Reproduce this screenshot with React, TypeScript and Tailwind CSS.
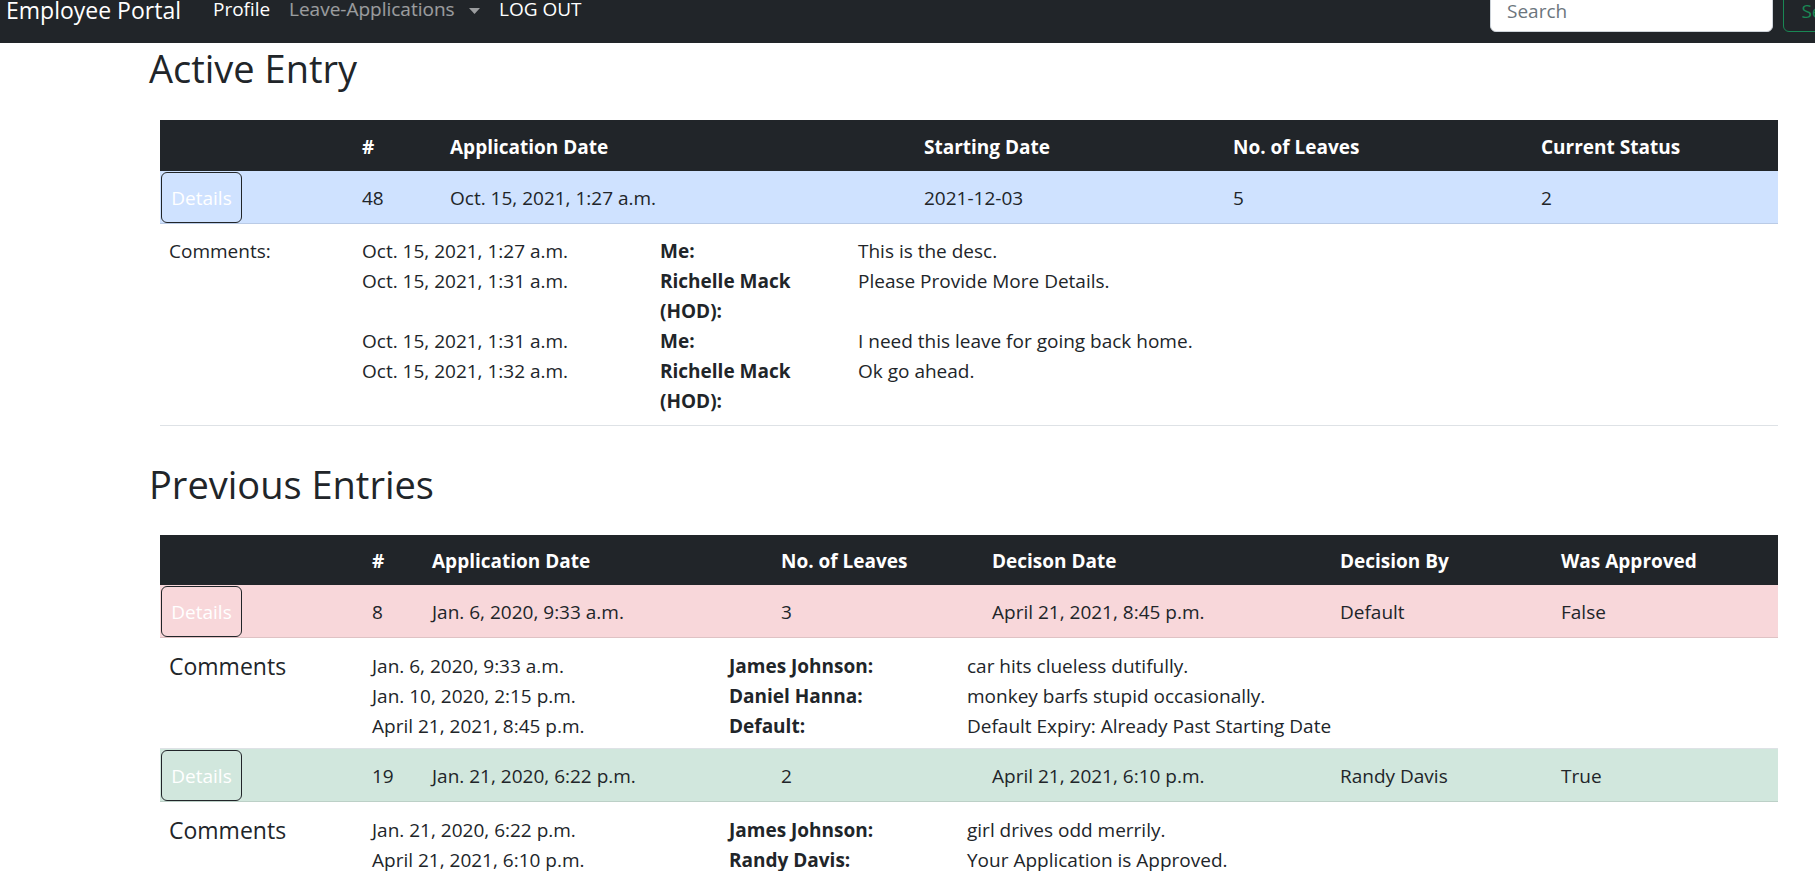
import React from "react";

type Comment = { date: string; by: string; text: string };

const activeComments: Comment[] = [
  { date: "Oct. 15, 2021, 1:27 a.m.", by: "Me:", text: "This is the desc." },
  { date: "Oct. 15, 2021, 1:31 a.m.", by: "Richelle Mack (HOD):", text: "Please Provide More Details." },
  { date: "Oct. 15, 2021, 1:31 a.m.", by: "Me:", text: "I need this leave for going back home." },
  { date: "Oct. 15, 2021, 1:32 a.m.", by: "Richelle Mack (HOD):", text: "Ok go ahead." },
];

type PrevEntry = {
  id: number;
  applied: string;
  leaves: number;
  decided: string;
  by: string;
  approved: boolean;
  comments: Comment[];
};

const previous: PrevEntry[] = [
  {
    id: 8,
    applied: "Jan. 6, 2020, 9:33 a.m.",
    leaves: 3,
    decided: "April 21, 2021, 8:45 p.m.",
    by: "Default",
    approved: false,
    comments: [
      { date: "Jan. 6, 2020, 9:33 a.m.", by: "James Johnson:", text: "car hits clueless dutifully." },
      { date: "Jan. 10, 2020, 2:15 p.m.", by: "Daniel Hanna:", text: "monkey barfs stupid occasionally." },
      { date: "April 21, 2021, 8:45 p.m.", by: "Default:", text: "Default Expiry: Already Past Starting Date" },
    ],
  },
  {
    id: 19,
    applied: "Jan. 21, 2020, 6:22 p.m.",
    leaves: 2,
    decided: "April 21, 2021, 6:10 p.m.",
    by: "Randy Davis",
    approved: true,
    comments: [
      { date: "Jan. 21, 2020, 6:22 p.m.", by: "James Johnson:", text: "girl drives odd merrily." },
      { date: "April 21, 2021, 6:10 p.m.", by: "Randy Davis:", text: "Your Application is Approved." },
    ],
  },
];

function DetailsButton() {
  return (
    <button
      type="button"
      className="ml-px h-[51px] w-[81px] rounded-[6px] border border-[#212529] pt-[2px] text-center text-[19px] text-white"
    >
      Details
    </button>
  );
}

function Navbar() {
  return (
    <nav className="h-[43px] overflow-hidden bg-[#212529]">
      <div className="flex w-[1890px] items-start pr-[10px] text-[19px] leading-[19px]">
        <a className="-mt-px ml-[6px] w-[207px] shrink-0 text-[23px] leading-[23px] text-white">Employee Portal</a>
        <a className="w-[76px] shrink-0 text-white">Profile</a>
        <a className="flex w-[210px] shrink-0 items-start text-white/55">
          <span className="w-[180px]">Leave-Applications</span>
          <svg width="11" height="6" viewBox="0 0 11 6" className="mt-[8px]" aria-hidden="true">
            <path d="M0 0h11L5.5 6z" fill="currentColor" />
          </svg>
        </a>
        <a className="shrink-0 text-white">LOG OUT</a>
        <div className="ml-auto flex shrink-0 items-start">
          <input
            type="text"
            placeholder="Search"
            className="-mt-[15px] h-[47px] w-[283px] rounded-[6px] border border-[#ced4da] bg-white px-[16px] pt-[5px] text-[19px] text-[#212529] outline-none placeholder:text-[#6c757d]"
          />
          <button
            type="button"
            className="-mt-[15px] ml-[10px] h-[47px] w-[97px] rounded-[6px] border border-[#198754] pt-[5px] text-[19px] text-[#198754]"
          >
            Search
          </button>
        </div>
      </div>
    </nav>
  );
}

function ActiveEntry() {
  const cols = "grid grid-cols-[192px_88px_474px_309px_308px_1fr]";
  return (
    <div>
      <div className={`${cols} h-[51px] items-center bg-[#212529] pt-[3px] text-[19px] font-bold text-white`}>
        <div />
        <div className="px-[10px]">#</div>
        <div className="px-[10px]">Application Date</div>
        <div className="px-[10px]">Starting Date</div>
        <div className="px-[10px]">No. of Leaves</div>
        <div className="px-[10px]">Current Status</div>
      </div>
      <div className={`${cols} h-[53px] items-center border-b border-[#bacbe6] bg-[#cfe2ff]`}>
        <div>
          <DetailsButton />
        </div>
        <div className="px-[10px] pt-[3px]">48</div>
        <div className="px-[10px] pt-[3px]">Oct. 15, 2021, 1:27 a.m.</div>
        <div className="px-[10px] pt-[3px]">2021-12-03</div>
        <div className="px-[10px] pt-[3px]">5</div>
        <div className="px-[10px] pt-[3px]">2</div>
      </div>
      <div className="grid grid-cols-[192px_1fr] border-b border-[#dee2e6] pt-[12px] pb-[9px] leading-[30px]">
        <div className="pl-[9px]">Comments:</div>
        <div className="grid grid-cols-[298px_198px_1fr]">
          {activeComments.map((c, i) => (
            <React.Fragment key={i}>
              <div className="px-[10px]">{c.date}</div>
              <div className="px-[10px] font-bold">{c.by}</div>
              <div className="px-[10px]">{c.text}</div>
            </React.Fragment>
          ))}
        </div>
      </div>
    </div>
  );
}

function PreviousEntries() {
  const cols = "grid grid-cols-[202px_60px_349px_211px_348px_221px_1fr]";
  return (
    <div>
      <div className={`${cols} h-[50px] items-center bg-[#212529] pt-[3px] text-[19px] font-bold text-white`}>
        <div />
        <div className="px-[10px]">#</div>
        <div className="px-[10px]">Application Date</div>
        <div className="px-[10px]">No. of Leaves</div>
        <div className="px-[10px]">Decison Date</div>
        <div className="px-[10px]">Decision By</div>
        <div className="px-[10px]">Was Approved</div>
      </div>
      {previous.map((e) => (
        <React.Fragment key={e.id}>
          <div
            className={`${cols} h-[53px] items-center border-b ${
              e.approved ? "border-[#bcd0c7] bg-[#d1e7dd]" : "border-[#dfc2c4] bg-[#f8d7da]"
            }`}
          >
            <div>
              <DetailsButton />
            </div>
            <div className="px-[10px] pt-[3px]">{e.id}</div>
            <div className="px-[10px] pt-[3px]">{e.applied}</div>
            <div className="px-[10px] pt-[3px]">{e.leaves}</div>
            <div className="px-[10px] pt-[3px]">{e.decided}</div>
            <div className="px-[10px] pt-[3px]">{e.by}</div>
            <div className="px-[10px] pt-[3px]">{e.approved ? "True" : "False"}</div>
          </div>
          <div className="grid grid-cols-[202px_1fr] border-b border-[#dee2e6] pt-[13px] pb-[7px] leading-[30px]">
            <div className="pl-[9px] text-[23px]">Comments</div>
            <div className="grid grid-cols-[357px_238px_1fr]">
              {e.comments.map((c, i) => (
                <React.Fragment key={i}>
                  <div className="px-[10px]">{c.date}</div>
                  <div className="px-[10px] font-bold">{c.by}</div>
                  <div className="px-[10px]">{c.text}</div>
                </React.Fragment>
              ))}
            </div>
          </div>
        </React.Fragment>
      ))}
    </div>
  );
}

export default function App() {
  return (
    <div className="min-h-screen w-full overflow-x-hidden bg-white font-['Open_Sans',sans-serif] text-[19px] text-[#212529]">
      <Navbar />
      <main className="pr-[37px] pl-[160px]">
        <h2 className="-ml-[11px] mt-[2px] mb-[29px] text-[38px] leading-[46px] font-normal">Active Entry</h2>
        <ActiveEntry />
        <h2 className="-ml-[11px] mt-[35px] mb-[28px] text-[38px] leading-[46px] font-normal">Previous Entries</h2>
        <PreviousEntries />
      </main>
    </div>
  );
}
